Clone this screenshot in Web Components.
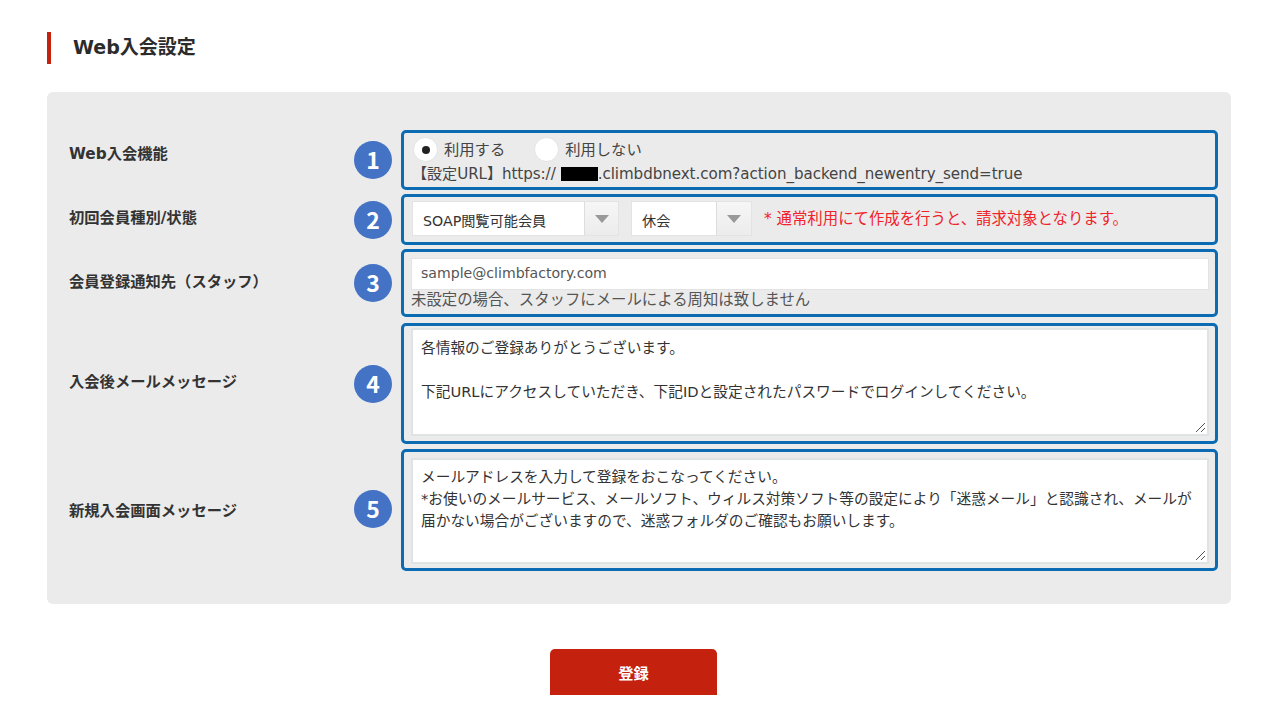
<!DOCTYPE html>
<html lang="ja">
<head>
<meta charset="utf-8">
<title>Web入会設定</title>
<style>
  html, body { margin: 0; background: #fff; }
  body {
    font-family: "DejaVu Sans", "Noto Sans CJK JP", sans-serif;
    color: #333;
    height: 720px;
    overflow: hidden;
  }
  main { display: block; padding: 32px 49px 0 47px; }
  .hint { font-size: 15.4px; line-height: 20px; color: #555; }
  .url { font-size: 15.1px; line-height: 22px; color: #444; margin-top: 1px; margin-left: -1px; letter-spacing: -0.05px; white-space: nowrap; }
  .mask { display: inline-block; width: 37px; height: 14px; background: #000; vertical-align: -2px; margin-left: 5px; }
  .radios { display: flex; gap: 29px; }
</style>
</head>
<body>
<main>
  <page-title>Web入会設定</page-title>
  <form-panel>
    <form-row n="1" label="Web入会機能" style="--h:60px;--gap:0px;--lift:-8px;--pad:4px 8px 0 9px">
      <div class="radios">
        <radio-item checked>利用する</radio-item>
        <radio-item>利用しない</radio-item>
      </div>
      <div class="url">【設定URL】https://<span class="mask"></span>.climbdbnext.com?action_backend_newentry_send=true</div>
    </form-row>
    <form-row n="2" label="初回会員種別/状態" style="--h:51px;--gap:4px;--lift:-4px;--pad:4px 8px 0 8px">
      <select-line>
        <fake-select style="--w:207px;--seam:33px">SOAP閲覧可能会員</fake-select>
        <fake-select style="--w:121px;--seam:34px">休会</fake-select>
        <span slot="note">* 通常利用にて作成を行うと、請求対象となります。</span>
      </select-line>
    </form-row>
    <form-row n="3" label="会員登録通知先（スタッフ）" style="--h:68px;--gap:4px;--lift:-3px;--pad:6px 6px 0 7px">
      <text-input>sample@climbfactory.com</text-input>
      <div class="hint">未設定の場合、スタッフにメールによる周知は致しません</div>
    </form-row>
    <form-row n="4" label="入会後メールメッセージ" style="--h:121px;--gap:6px;--lift:-4px;--pad:2px 6px 0 7px">
      <text-area style="--ta:108px;--tp:7px">各情報のご登録ありがとうございます。<br><br>下記URLにアクセスしていただき、下記IDと設定されたパスワードでログインしてください。</text-area>
    </form-row>
    <form-row n="5" label="新規入会画面メッセージ" style="--h:122px;--gap:5px;--lift:-1px;--blift:-1px;--pad:6px 6px 0 7px">
      <text-area style="--ta:106px;--tp:6px">メールアドレスを入力して登録をおこなってください。<br>*お使いのメールサービス、メールソフト、ウィルス対策ソフト等の設定により「迷惑メール」と認識され、メールが<br>届かない場合がございますので、迷惑フォルダのご確認もお願いします。</text-area>
    </form-row>
  </form-panel>
  <submit-button>登録</submit-button>
</main>

<script>
// small helper so every element gets an open shadow root from a template string
function shadow(el, html) {
  el.attachShadow({ mode: 'open' }).innerHTML = html;
}

class PageTitle extends HTMLElement {
  constructor() {
    super();
    shadow(this, `
      <style>
        :host { display: block; height: 32px; border-left: 4px solid #c4210f; padding-left: 22px;
                font-size: 19px; font-weight: 700; line-height: 30px; color: #2b2b2b; }
      </style>
      <slot></slot>`);
  }
}

class FormPanel extends HTMLElement {
  constructor() {
    super();
    shadow(this, `
      <style>
        :host { display: block; margin-top: 28px; height: 512px; box-sizing: border-box;
                background: #ebebeb; border-radius: 6px; padding: 38px 13px 0 8px; }
      </style>
      <slot></slot>`);
  }
}

class FormRow extends HTMLElement {
  constructor() {
    super();
    shadow(this, `
      <style>
        :host { display: grid; grid-template-columns: 299px 38px 817px; column-gap: 0;
                height: var(--h); margin-top: var(--gap); align-items: center; }
        .label { padding-left: 14px; font-size: 15.3px; font-weight: 700; color: #333;
                 margin-bottom: calc(var(--lift) * -2); }
        .badge { width: 38px; height: 38px; border-radius: 50%; background: #4472c4; color: #fff;
                 font: 700 23px/36px "Noto Sans CJK JP", sans-serif; text-align: center;
                 margin-bottom: calc(var(--blift, 0px) * -2); }
        .box { margin-left: 9px; width: 817px; height: var(--h); box-sizing: border-box;
               border: 3px solid #0b6cb3; border-radius: 5px; padding: var(--pad); }
      </style>
      <div class="label">${this.getAttribute('label')}</div>
      <div class="badge">${this.getAttribute('n')}</div>
      <div class="box"><slot></slot></div>`);
  }
}

class RadioItem extends HTMLElement {
  constructor() {
    super();
    shadow(this, `
      <style>
        :host { display: inline-flex; align-items: center; gap: 6px; height: 25px;
                font-size: 15.3px; line-height: 22px; color: #444; }
        .dot { width: 25px; height: 25px; border-radius: 50%; background: #fff;
               border: 1px solid #e4e4e4; box-sizing: border-box; display: grid; place-items: center; }
        :host([checked]) .dot::after { content: ""; width: 8px; height: 8px; border-radius: 50%; background: #222; }
      </style>
      <span class="dot"></span><slot></slot>`);
  }
}

class SelectLine extends HTMLElement {
  constructor() {
    super();
    shadow(this, `
      <style>
        :host { display: flex; align-items: center; gap: 12px; }
        .note { color: #f0222a; font-size: 15.4px; line-height: 22px; }
      </style>
      <slot></slot><span class="note"><slot name="note"></slot></span>`);
  }
}

class FakeSelect extends HTMLElement {
  constructor() {
    super();
    shadow(this, `
      <style>
        :host { display: flex; width: var(--w); height: 35px; box-sizing: border-box; background: #fff;
                border: 1px solid #e3e3e3; font-size: 14.2px; color: #333; }
        .value { flex: 1; padding-left: 10px; line-height: 39px; }
        .arrow { width: var(--seam); background: linear-gradient(#f6f6f6, #ececec); border-left: 1px solid #ddd;
                 display: grid; place-items: center; }
        svg { display: block; }
      </style>
      <div class="value"><slot></slot></div>
      <div class="arrow"><svg width="14" height="8" viewBox="0 0 14 8"><path d="M0 0h14L7 8z" fill="#999"/></svg></div>`);
  }
}

class TextInput extends HTMLElement {
  constructor() {
    super();
    shadow(this, `
      <style>
        :host { display: block; height: 32px; box-sizing: border-box; background: #fff;
                border: 1px solid #e3e3e3; padding-left: 9px; font-size: 14.1px; line-height: 28px; color: #555; }
      </style>
      <slot></slot>`);
  }
}

class TextArea extends HTMLElement {
  constructor() {
    super();
    shadow(this, `
      <style>
        :host { display: block; position: relative; height: var(--ta); box-sizing: border-box; background: #fff;
                border: 2px solid #dfe3e3; padding: var(--tp) 8px; font-size: 14.7px; line-height: 22px; color: #333; }
        svg { position: absolute; right: 1px; bottom: 1px; }
      </style>
      <slot></slot>
      <svg width="11" height="11" viewBox="0 0 11 11"><path d="M1 10 10 1M6 10l4-4" stroke="#555" fill="none"/></svg>`);
  }
}

class SubmitButton extends HTMLElement {
  constructor() {
    super();
    shadow(this, `
      <style>
        :host { display: block; width: 167px; height: 46px; margin: 45px auto 0 503px; background: #c4210f;
                border-radius: 5px 5px 0 0; color: #fff; font-size: 15.3px; font-weight: 700;
                text-align: center; line-height: 50px; }
      </style>
      <slot></slot>`);
  }
}

customElements.define('page-title', PageTitle);
customElements.define('form-panel', FormPanel);
customElements.define('form-row', FormRow);
customElements.define('radio-item', RadioItem);
customElements.define('select-line', SelectLine);
customElements.define('fake-select', FakeSelect);
customElements.define('text-input', TextInput);
customElements.define('text-area', TextArea);
customElements.define('submit-button', SubmitButton);
</script>
</body>
</html>
